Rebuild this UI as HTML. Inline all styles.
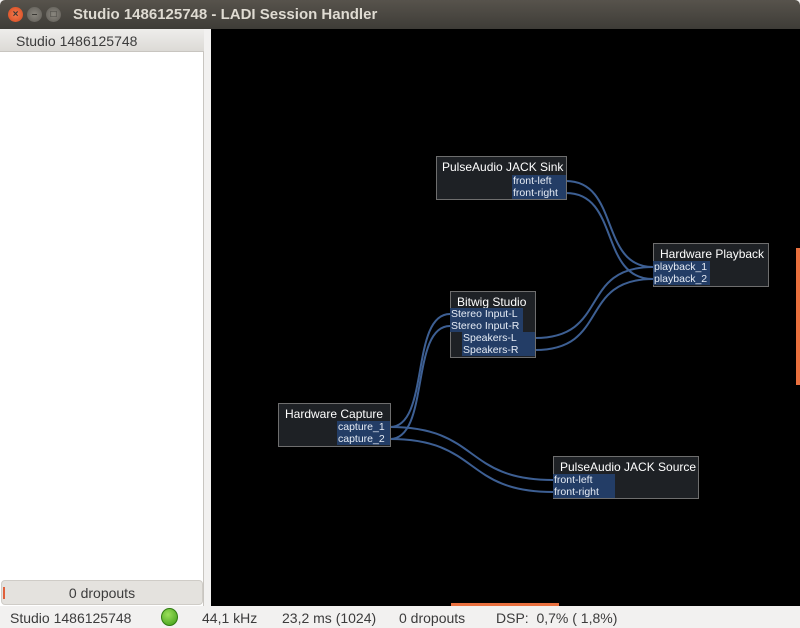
<!DOCTYPE html>
<html><head><style>
*{margin:0;padding:0;box-sizing:border-box}
body{width:800px;height:628px;background:#f2f1f0;font-family:"Liberation Sans","DejaVu Sans",sans-serif;position:relative;overflow:hidden}
.tb{position:absolute;left:0;top:0;width:800px;height:29px;background:linear-gradient(#57534c,#3e3c37);border-radius:5px 5px 0 0}
.tb .t{position:absolute;left:73px;top:6px;color:#dfdbd2;font-weight:bold;font-size:15px}
.btn{position:absolute;top:7px;width:15px;height:15px;border-radius:50%;color:#3a3834;font-size:10px;line-height:15px;text-align:center;font-weight:bold}
.side{position:absolute;left:0;top:29px;width:204px;height:577px;background:#fff;border-right:1px solid #c8c5c0}
.sh{position:absolute;left:0;top:0;width:204px;height:23px;background:linear-gradient(#eeedeb,#dcdad6);border-bottom:1px solid #c8c5c0;font-size:14px;color:#3c3c3c;padding:4px 0 0 16px}
.drop{position:absolute;left:1px;top:551px;width:202px;height:25px;background:#e4e2de;border:1px solid #cfccc7;border-radius:4px;text-align:center;font-size:14px;color:#3c3c3c;padding-top:4px}
.canvas{position:absolute;left:211px;top:29px;width:589px;height:577px;background:#000}
.status{position:absolute;top:610px;font-size:14px;color:#3c3c3c}
.n{position:absolute;background:#1e2125;border:1px solid #6e6e6e;color:#fff;font-size:12px}
.n .h{position:absolute;top:3px;white-space:nowrap}
.p{position:absolute;height:12px;background:#233d66;color:#e6ecf5;font-size:10.5px;line-height:12px;padding-left:1px;white-space:nowrap}
</style></head><body>
<div class="tb">
<div class="btn" style="left:8px;background:radial-gradient(#f47a4e,#d4491f)">×</div>
<div class="btn" style="left:27px;background:radial-gradient(#8a877f,#5e5b55)">–</div>
<div class="btn" style="left:46px;background:radial-gradient(#8a877f,#5e5b55)">□</div>
<div class="t">Studio 1486125748 - LADI Session Handler</div>
</div>
<div class="side"><div class="sh">Studio 1486125748</div>
<div class="drop"><span style="position:absolute;left:1px;top:6px;width:2px;height:12px;background:#e0603a"></span>0 dropouts</div></div>
<div class="canvas"></div>
<svg style="position:absolute;left:0;top:0" width="800" height="628">
<g fill="none" stroke="#3d5f93" stroke-width="2">
<path d="M390 427 C430 427 410 314 450 314"/>
<path d="M390 439 C430 439 410 326 450 326"/>
<path d="M390 427 C480 427 463 480 553 480"/>
<path d="M390 439 C480 439 463 492 553 492"/>
<path d="M535 338 C610 338 578 267 653 267"/>
<path d="M535 350 C610 350 578 279 653 279"/>
<path d="M566 181 C620 181 599 267 653 267"/>
<path d="M566 193 C620 193 599 279 653 279"/>
</g>
<rect x="796" y="248" width="4" height="137" fill="#e9703f"/>
<rect x="451" y="603" width="108" height="3" fill="#e9703f"/>
</svg>
<div class="n" style="left:436px;top:156px;width:131px;height:44px"><div class="h" style="left:5px">PulseAudio JACK Sink</div>
<div class="p" style="left:75px;top:18px;width:54px">front-left</div><div class="p" style="left:75px;top:30px;width:54px">front-right</div></div>
<div class="n" style="left:653px;top:243px;width:116px;height:44px"><div class="h" style="left:6px">Hardware Playback</div>
<div class="p" style="left:-1px;top:17px;width:57px">playback_1</div><div class="p" style="left:-1px;top:29px;width:57px">playback_2</div></div>
<div class="n" style="left:450px;top:291px;width:86px;height:67px"><div class="h" style="left:6px">Bitwig Studio</div>
<div class="p" style="left:-1px;top:16px;width:73px">Stereo Input-L</div><div class="p" style="left:-1px;top:28px;width:73px">Stereo Input-R</div>
<div class="p" style="left:11px;top:40px;width:73px">Speakers-L</div><div class="p" style="left:11px;top:52px;width:73px">Speakers-R</div></div>
<div class="n" style="left:278px;top:403px;width:113px;height:44px"><div class="h" style="left:6px">Hardware Capture</div>
<div class="p" style="left:58px;top:17px;width:53px">capture_1</div><div class="p" style="left:58px;top:29px;width:53px">capture_2</div></div>
<div class="n" style="left:553px;top:456px;width:146px;height:43px"><div class="h" style="left:6px">PulseAudio JACK Source</div>
<div class="p" style="left:-1px;top:17px;width:62px">front-left</div><div class="p" style="left:-1px;top:29px;width:62px">front-right</div></div>
<div class="status" style="left:10px">Studio 1486125748</div>
<div style="position:absolute;left:161px;top:608px;width:17px;height:18px;border-radius:50%;background:radial-gradient(circle at 40% 35%,#9be05a,#3c9a14);border:1px solid #2f7a10"></div>
<div class="status" style="left:202px">44,1 kHz</div>
<div class="status" style="left:282px">23,2 ms (1024)</div>
<div class="status" style="left:399px">0 dropouts</div>
<div class="status" style="left:496px">DSP:&nbsp; 0,7% (&nbsp;1,8%)</div>
</body></html>
